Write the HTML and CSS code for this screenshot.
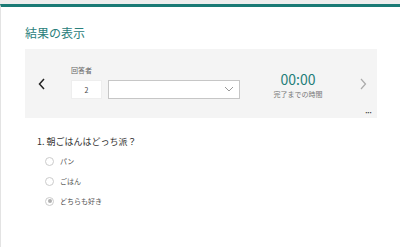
FILE: index.html
```html
<!DOCTYPE html>
<html lang="ja">
<head>
    <meta charset="UTF-8">
    <meta name="viewport" content="width=device-width, initial-scale=1.0">
    <title>結果の表示</title>
    <link rel="stylesheet" href="styles.css">
</head>
<body>
    <div class="page">
        <h1 class="title">結果の表示</h1>
        <div class="panel">
            <button class="nav prev" type="button">
                <svg width="8" height="12" viewBox="0 0 8 12"><path d="M6 1 L1.5 6 L6 11" fill="none" stroke="#222" stroke-width="1.5"/></svg>
            </button>
            <div class="responder">
                <div class="label">回答者</div>
                <div class="fields">
                    <div class="num">2</div>
                    <div class="select">
                        <svg width="10" height="6" viewBox="0 0 10 6"><path d="M1 1 L5 5 L9 1" fill="none" stroke="#999" stroke-width="1"/></svg>
                    </div>
                </div>
            </div>
            <div class="timer">
                <div class="time">00:00</div>
                <div class="caption">完了までの時間</div>
            </div>
            <button class="nav next" type="button">
                <svg width="8" height="12" viewBox="0 0 8 12"><path d="M2 1 L6.5 6 L2 11" fill="none" stroke="#aaa" stroke-width="1.2"/></svg>
            </button>
            <div class="more">•••</div>
        </div>
        <div class="question">
            <div class="q-title">1. 朝ごはんはどっち派？</div>
            <label class="option"><span class="radio"></span>パン</label>
            <label class="option"><span class="radio"></span>ごはん</label>
            <label class="option"><span class="radio checked"></span>どちらも好き</label>
        </div>
    </div>
</body>
</html>
```
FILE: styles.css
```css
body {
    margin: 0;
    background: #ededed;
    font-family: "Noto Sans CJK JP", "Noto Sans", sans-serif;
}
.page {
    margin-top: 4px;
    height: 240px;
    background: #fff;
    border-top: 3px solid #1a7a75;
    border-left: 1px solid #e3e3e3;
}
.title {
    margin: 0;
    padding: 17px 0 0 24px;
    font-size: 12px;
    font-weight: normal;
    color: #2a807b;
    line-height: 18px;
}
.panel {
    position: relative;
    display: flex;
    align-items: center;
    width: 352px;
    height: 69px;
    margin: 7px 0 0 24px;
    background: #f4f4f4;
}
.nav {
    border: none;
    background: none;
    padding: 0;
    display: flex;
}
.prev {
    margin-left: 13px;
}
.responder {
    margin-left: 25px;
    margin-top: -4px;
}
.label {
    font-size: 7px;
    color: #666;
    margin-bottom: 5px;
}
.fields {
    display: flex;
    gap: 6px;
}
.num {
    width: 31px;
    height: 19px;
    background: #fff;
    border: 1px solid #eee;
    box-sizing: border-box;
    font-size: 7px;
    color: #444;
    text-align: center;
    line-height: 18px;
}
.select {
    width: 132px;
    height: 19px;
    background: #fff;
    border: 1px solid #c6c6c6;
    box-sizing: border-box;
    display: flex;
    align-items: center;
    justify-content: flex-end;
    padding-right: 5px;
}
.timer {
    margin-left: 38px;
    margin-top: 1px;
    width: 40px;
    text-align: center;
}
.time {
    font-size: 14px;
    color: #1f7e79;
    line-height: 20px;
}
.caption {
    font-size: 7px;
    color: #777;
    line-height: 10px;
    white-space: nowrap;
    margin-left: -10px;
    margin-right: -10px;
}
.next {
    margin-left: 41px;
}
.more {
    position: absolute;
    right: 5px;
    bottom: 3px;
    font-size: 5px;
    letter-spacing: 0.5px;
    color: #333;
}
.question {
    padding: 17px 0 0 36px;
}
.q-title {
    font-size: 9px;
    color: #333;
    line-height: 14px;
    margin-bottom: 2px;
}
.option {
    display: flex;
    align-items: center;
    height: 20px;
    padding-left: 8px;
    font-size: 7px;
    color: #555;
}
.radio {
    width: 9px;
    height: 9px;
    border: 1px solid #ccc;
    border-radius: 50%;
    box-sizing: border-box;
    margin-right: 6px;
    position: relative;
    background: #fff;
}
.radio.checked::after {
    content: "";
    position: absolute;
    left: 1.5px;
    top: 1.5px;
    width: 4px;
    height: 4px;
    border-radius: 50%;
    background: #b0b0b0;
}
```
